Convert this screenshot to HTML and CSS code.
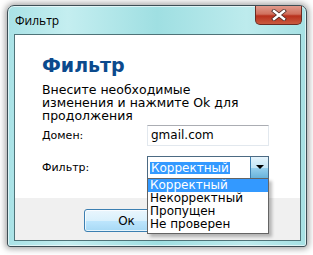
FILE: index.html
```html
<!DOCTYPE html>
<html>
<head>
    <meta charset="UTF-8">
    <link rel="stylesheet" href="styles.css">
</head>
<body>
<div class="win">
    <div class="title">
        <span class="caption">Фильтр</span>
        <span class="close">
            <svg width="20" height="12" viewBox="0 0 20 12"><path d="M5 2 L15 10 M15 2 L5 10" stroke="#4a2a26" stroke-width="4" stroke-linecap="square"/><path d="M5 2 L15 10 M15 2 L5 10" stroke="#fff" stroke-width="2.4" stroke-linecap="square"/></svg>
        </span>
    </div>
    <div class="client">
        <div class="main">
            <p class="head">Фильтр</p>
            <p class="note">Внесите необходимые<br>изменения и нажмите Ok для<br>продолжения</p>
            <div class="row">
                <span class="lbl">Домен:</span>
                <span class="input">gmail.com</span>
            </div>
            <div class="row row2">
                <span class="lbl">Фильтр:</span>
                <div class="combo">
                    <span class="value"><span class="sel">Корректный</span></span>
                    <span class="arrow"><svg width="8" height="5" viewBox="0 0 8 5"><path d="M0 0 H8 L4 4 Z" fill="#000"/></svg></span>
                    <ul class="list">
                        <li class="on">Корректный</li>
                        <li>Некорректный</li>
                        <li>Пропущен</li>
                        <li>Не проверен</li>
                    </ul>
                </div>
            </div>
        </div>
        <div class="buttons">
            <span class="btn">Ок</span>
        </div>
    </div>
</div>
</body>
</html>
```

FILE: styles.css
```css
body,p,ul,li,div,span{margin: 0;padding: 0;}
body{width: 313px;height: 255px;background: #fff;font-family: "DejaVu Sans", Verdana, sans-serif;font-size: 11px;color: #000;overflow: hidden;}
.win{
    margin: 5px 0 0 7px;width: 300px;height: 242px;
    border: 1px solid #3d4e55;border-radius: 7px 7px 3px 3px;
    background: linear-gradient(90deg, #a9e2e6 0%, #c4eef0 20%, #9fdfe2 50%, #bdebed 80%, #a6e1e4 100%);
    box-shadow: 0 0 6px 2px rgba(0,0,0,0.35), inset 0 0 0 1px rgba(255,255,255,0.6);
    display: flex;flex-direction: column;padding: 0 5px 5px 6px;box-sizing: border-box;
}
.title{height: 28px;display: flex;align-items: flex-start;justify-content: space-between;}
.caption{font-family: "Open Sans", "Noto Sans", sans-serif;font-size: 12px;padding: 7px 0 0 1px;line-height: 15px;}
.close{
    width: 47px;height: 19px;margin-right: -1px;box-sizing: border-box;
    border: 1px solid #6a2b22;border-top: 0;border-radius: 0 0 5px 5px;
    background: linear-gradient(#e09a8c 0%, #d0705d 45%, #b8301c 55%, #c95a3f 100%);
    display: flex;align-items: center;justify-content: center;
}
.client{flex: 1;border: 1px solid #4f7378;display: flex;flex-direction: column;}
.main{flex: 1;background: #fff;padding: 0 0 0 27px;}
.head{font-size: 19px;font-weight: bold;color: #0b4a8d;line-height: 22px;margin-top: 19px;}
.note{font-size: 12.5px;line-height: 13px;margin-top: 7px;}
.row{display: flex;align-items: center;margin-top: 3px;height: 21px;}
.row2{margin-top: 10px;height: 23px;}
.lbl{width: 105px;}
.input{
    width: 122px;height: 21px;box-sizing: border-box;padding: 0 3px;line-height: 19px;
    border: 1px solid #e2e8ee;border-top-color: #abadb3;font-size: 12px;
}
.combo{position: relative;width: 122px;height: 23px;box-sizing: border-box;border: 1px solid #4c6a83;display: flex;}
.value{flex: 1;display: flex;align-items: center;padding-left: 2px;font-size: 12px;}
.sel{background: #3399ff;color: #fff;line-height: 12px;padding: 0 1px;}
.arrow{
    width: 17px;border-left: 1px solid #3c7fb1;
    background: linear-gradient(#e5f4fc 0%, #c4e5f6 50%, #98d1ef 51%, #68b3db 100%);
    display: flex;align-items: center;justify-content: center;
}
.list{
    position: absolute;left: -1px;top: 21px;width: 122px;box-sizing: border-box;
    list-style: none;border: 1px solid #646464;background: #fff;padding-bottom: 2px;
    box-shadow: 3px 3px 3px rgba(0,0,0,0.25);font-size: 12px;
}
.list li{line-height: 13px;padding-left: 2px;}
.list .on{background: #3399ff;color: #fff;}
.buttons{height: 42px;background: #f0f0f0;padding: 11px 0 0 69px;box-sizing: border-box;}
.btn{
    display: flex;align-items: center;justify-content: center;width: 85px;height: 23px;box-sizing: border-box;
    border: 1px solid #3c7fb1;border-radius: 3px;font-size: 12px;
    background: linear-gradient(#eaf6fd 0%, #d9f0fc 50%, #bee6fd 51%, #a7d9f5 100%);
    box-shadow: inset 0 0 0 1px rgba(255,255,255,0.7);
}
```
